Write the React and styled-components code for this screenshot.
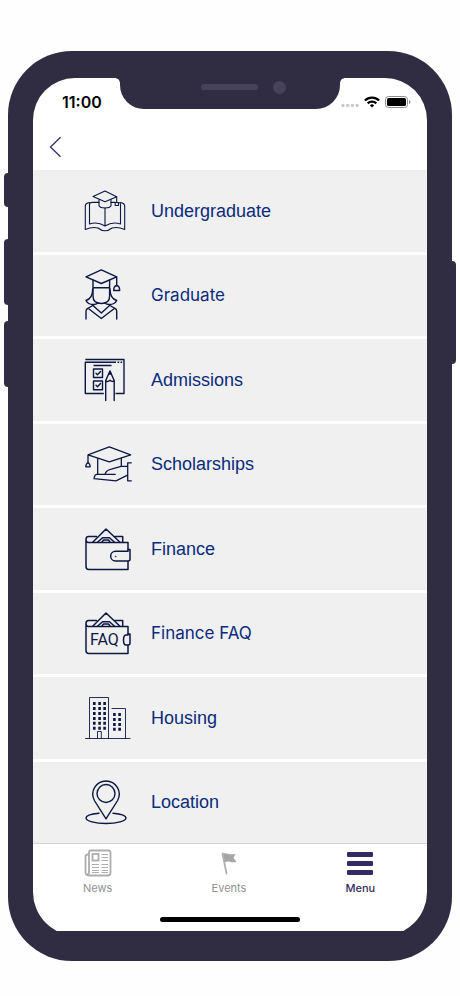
import React from "react";
import styled, { createGlobalStyle } from "styled-components";

const GlobalStyle = createGlobalStyle`
  *, *::before, *::after { box-sizing: border-box; }
  body { margin: 0; background: #fefefe; font-family: "Liberation Sans", Arial, sans-serif; }
`;

const SHELL = "#302d43";
const NAVY = "#0d1744";

const Page = styled.div`
  display: flex;
  min-height: 100vh;
  padding: 51px 0 35px;
`;

const Rail = styled.div`
  flex: 0 0 8px;
  display: flex;
  flex-direction: column;
  padding-top: ${(p) => p.$top}px;
  align-items: ${(p) => (p.$side === "left" ? "flex-end" : "flex-start")};
`;

const SideKey = styled.div`
  width: 4px;
  height: ${(p) => p.$length}px;
  margin-top: ${(p) => p.$before || 0}px;
  background: ${SHELL};
  border-radius: ${(p) => (p.$side === "left" ? "4px 0 0 4px" : "0 4px 4px 0")};
`;

const Phone = styled.div`
  flex: 1;
  display: flex;
  padding: 27px 25px 25px;
  background: ${SHELL};
  border-radius: 64px;
`;

const Screen = styled.div`
  position: relative;
  flex: 1;
  display: flex;
  flex-direction: column;
  padding-bottom: 5px;
  background: #fff;
  border-radius: 42px 42px 44px 44px;
  clip-path: inset(0 0 5px 0);
`;

const Notch = styled.div`
  position: absolute;
  top: -1px;
  left: 50%;
  transform: translateX(-50%);
  width: 220px;
  height: 32px;
  display: flex;
  align-items: center;
  justify-content: flex-end;
  gap: 15px;
  padding: 0 54px 12px 0;
  background: ${SHELL};
  border-radius: 0 0 24px 24px;

  &::before,
  &::after {
    content: "";
    position: absolute;
    top: 1px;
    width: 4px;
    height: 4px;
  }
  &::before {
    left: -4px;
    background: radial-gradient(circle at 0 100%, transparent 3px, ${SHELL} 4px);
  }
  &::after {
    right: -4px;
    background: radial-gradient(circle at 100% 100%, transparent 3px, ${SHELL} 4px);
  }
`;

const Speaker = styled.div`
  width: 57px;
  height: 6px;
  border-radius: 3px;
  background: #454259;
`;

const Camera = styled.div`
  width: 13px;
  height: 13px;
  border-radius: 50%;
  background: #454259;
`;

const StatusBar = styled.div`
  display: flex;
  align-items: center;
  justify-content: space-between;
  height: 48px;
  padding: 0 16px 0 29px;
`;

const Time = styled.time`
  font: 600 16px/20px Inter, sans-serif;
  color: #000;
`;

const StatusIcons = styled.div`
  display: flex;
  align-items: center;
  gap: 5px;
`;

const Header = styled.header`
  display: flex;
  align-items: center;
  height: 44px;
  padding: 0 12px 2px;
`;

const BackButton = styled.button`
  display: flex;
  padding: 4px;
  border: 0;
  background: none;
  cursor: pointer;
`;

const MenuList = styled.nav`
  flex: 1;
  display: grid;
  grid-template-columns: 1fr;
  grid-auto-rows: minmax(72px, 1fr);
  gap: 3px;
`;

const MenuLink = styled.a`
  display: flex;
  align-items: center;
  gap: 19px;
  padding: 0 24px 0 51px;
  background: #f0f0f0;
  color: #0b2b7c;
  text-decoration: none;
  font-family: ${(p) => (p.$face === "system" ? "Inter" : '"Liberation Sans"')}, sans-serif;
  font-size: ${(p) => (p.$face === "system" ? 17 : 18)}px;
  line-height: 24px;
`;

const IconSvg = styled.svg`
  flex: none;
  width: 48px;
  height: 52px;
  fill: none;
  stroke: ${NAVY};
  stroke-width: ${(p) => p.$weight};
  stroke-linejoin: round;
  stroke-linecap: round;
`;

const TabBar = styled.nav`
  display: grid;
  grid-template-columns: repeat(3, 1fr);
  border-top: 1px solid #d4d4d4;
  padding-top: 5px;
`;

const Tab = styled.button`
  display: flex;
  flex-direction: column;
  align-items: center;
  gap: 4px;
  padding: 0 2px 0 0;
  border: 0;
  background: none;
  font: ${(p) => (p.$active ? 500 : 400)} 11px/14px Inter, sans-serif;
  color: ${(p) => (p.$active ? "#342d63" : "#929292")};
  cursor: pointer;
`;

const HomeArea = styled.div`
  display: flex;
  justify-content: center;
  padding: 22px 0 9px;
`;

const HomeIndicator = styled.div`
  width: 140px;
  height: 5px;
  border-radius: 3px;
  background: #000;
`;

function Icon({ weight = 1.4, children }) {
  return (
    <IconSvg viewBox="0 0 48 52" $weight={weight} aria-hidden="true">
      {children}
    </IconSvg>
  );
}

const UndergraduateIcon = () => (
  <Icon weight={1.1}>
    <path d="M9 11.5 21 6l11.7 5.7L21 16.7z" />
    <path d="M15 14.5v6.3q1 2.2 6 2.2t6-2.2v-6.3" />
    <path d="M32.7 11.7v5.5M31.2 17.5h3.2v3h-3.2z" />
    <path d="M15 17.4H8.5q-3 0-3 2V39q8-2.6 15.5 2 7.5-4.6 15.5-2V19.5q0-2-2-2M27 17.4h4M21 23v18" />
    <path d="M5.5 17.6Q1.3 18 1.3 21v23.4q7-3 12.7-1.4 3.5 2.8 7 2.8t7-2.8q5.7-1.6 12.7 1.4V21q0-3-4.2-3.4" />
  </Icon>
);

const GraduateIcon = () => (
  <Icon weight={1.4}>
    <path d="M2 7.8 17.3.8l15.4 7L17.3 14.5zM32.7 7.8v8.7" />
    <path d="M32.7 16.5q-3 .5-3 5h6q0-4.5-3-5z" />
    <path d="M9 11v16q0 7.5 8.3 7.5t8.3-7.5V11M9 18.8h16.6" />
    <path d="M8.7 20c0 6-1.7 10-6.7 11.5q2 4 7.2 4 3 0 5-1.5M26 20c0 6 1.7 10 6.7 11.5q-2 4-7.2 4-3 0-5-1.5" />
    <path d="M2 50v-8q0-2 2.5-3l5-3M32.7 50v-8q0-2-2.5-3l-5-3" />
    <path d="m5 40 12.3 9.5L29.7 40M9 36.5l8.3 7.5 8.3-7.5" />
  </Icon>
);

const AdmissionsIcon = () => (
  <Icon weight={1.4}>
    <path strokeLinecap="butt" d="M1.3 5.5H40v34h-8.5M32 8.2H1.3v31.3h18.5M9.5 11.5h18" />
    <path strokeLinecap="butt" d="M33.5 8.2h1.7M36.5 8.2h1.7" />
    <path d="M9.5 15h9v8.5h-9zM9.5 27h9v8.7h-9z" />
    <path d="m12 19.3 1.5 1.5 3-3.3M12 31.3l1.5 1.5 3-3.3" />
    <path d="M21.7 46.5V26.5L26 17l4.2 9.5v20M21.7 26.5q2 2 4.3-.3 2.3 2.3 4.2.3" />
    <path fill={NAVY} d="m25 20 1-2.5 1 2.5z" />
  </Icon>
);

const ScholarshipsIcon = () => (
  <Icon weight={1.3}>
    <path d="m4 16.8 21.3-8 21.4 8-21.4 7zM4 16.8v8" />
    <path d="M4 24.8q-2 .5-2.2 4h4.4q-.2-3.5-2.2-4z" />
    <path d="M13.7 20.5v15.3M37.3 20.5v7.8" />
    <path d="M47.3 24.8h-3.6v18h3.6M43.7 28.3h-6.500l-9 2.500q-6.500 1.500-7 5.200" />
    <path d="M31.3 36.3H13q-2.5 0-3 4.400l22 2.100 11.500-5.600" />
  </Icon>
);

const WalletTop = () => (
  <>
    <path d="M44 27.5v-8H4.5Q2 19.5 2 16.5t2.5-3h8M31 13.5h7.7v6M2 16.5v27q0 3 2.8 3H44v-8" />
    <path d="M8.7 19.3 22 6l14 13.3M13.5 19.3l5-4.6h7l5 4.6M18 19l1.5-2h5l1.500 2" />
  </>
);

const FinanceIcon = () => (
  <Icon weight={1.5}>
    <WalletTop />
    <path d="M44 28.3H31.5a4.8 4.8 0 0 0 0 9.7H44q2 0 2-2v-9.5h-2" />
    <circle cx="31.5" cy="33.5" r=".4" strokeWidth="0.6" />
  </Icon>
);

const IconText = styled.text`
  font: 400 16px Roboto, sans-serif;
  fill: ${NAVY};
  stroke: none;
`;

const FinanceFaqIcon = () => (
  <Icon weight={1.5}>
    <WalletTop />
    <path d="M44 28h-2q-2.5 0-2.5 5t2.500 5h2q2 0 2-2v-9h-2" />
    <IconText x="6" y="38">FAQ</IconText>
  </Icon>
);

const windows = (columns, rows) =>
  columns.flatMap((x) => rows.map((y) => `M${x - 1.3} ${y - 1.5}h2.6v3h-2.6z`)).join("");

const HousingIcon = () => (
  <Icon weight={0.9}>
    <path d="M1.5 46.5H46M5.5 46.5v-41h19v41M28 16.5h13.5v30M13.5 46.5v-7h3.8v7" />
    <path
      fill={NAVY}
      stroke="none"
      d={
        windows([10.3, 15.6, 20.6], [11.6, 16.6, 21.5, 26.4, 31.3, 36.2]) +
        windows([30.4, 35.6], [22.6, 27.5, 32.4, 37.3])
      }
    />
  </Icon>
);

const LocationIcon = () => (
  <Icon weight={1.4}>
    <path d="M22 42.8 10.4 24.5A13.2 13.2 0 1 1 33.6 24.5z" />
    <circle cx="22" cy="17.5" r="9" />
    <path d="M15 37.3C7 38 2 39.7 2 42c0 3 9 5.500 20 5.500S42 45 42 42c0-2.3-5-4-13-4.700" />
  </Icon>
);

const NewsIcon = () => (
  <svg width="28" height="28" viewBox="0 0 28 28" fill="none" stroke="#adadad" strokeWidth="1.8" aria-hidden="true">
    <path d="M5 5.500H3.500Q1.500 5.500 1.500 8v15q0 3.500 3.500 3.500h19q2.500 0 2.500-3V3.500q0-2-2-2H7q-2 0-2 2V23q0 2.500-2 2.500" />
    <rect x="8.5" y="5" width="6" height="6.5" />
    <path strokeWidth="1" d="M17.5 5.500H24M17.5 8.500H24M17.5 11.500H24M8 15.500h7M8 18.500h7M8 21.500h7M8 23.500h7M17.500 15.500H24M17.500 18.500H24M17.500 21.500H24M17.500 23.500H24" />
  </svg>
);

const EventsIcon = () => (
  <svg width="28" height="28" viewBox="0 0 28 28" aria-hidden="true">
    <path d="m7.5 4.500 4 20" stroke="#b0b0b0" strokeWidth="1.8" strokeLinecap="round" />
    <path d="M8 4.500c4-1 6 2 12.500.3L18.500 9l3 3.700c-4.500 2-7-1.500-11.500.5z" fill="#a6a6a6" />
  </svg>
);

const MenuIcon = () => (
  <svg width="28" height="28" viewBox="0 0 28 28" fill="#342b64" aria-hidden="true">
    <rect x="1" y="3" width="26" height="5" rx="1" />
    <rect x="1" y="12" width="26" height="5" rx="1" />
    <rect x="1" y="21" width="26" height="5" rx="1" />
  </svg>
);

const SignalIcon = () => (
  <svg width="18" height="12" viewBox="0 0 18 12" fill="#c9c9c9" aria-hidden="true">
    <circle cx="2" cy="9.5" r="1.7" />
    <circle cx="6.7" cy="9.5" r="1.7" />
    <circle cx="11.4" cy="9.5" r="1.7" />
    <circle cx="16.1" cy="9.5" r="1.7" />
  </svg>
);

const WifiIcon = () => (
  <svg width="16" height="12" viewBox="0 0 16 12" fill="none" stroke="#000" strokeWidth="2.2" aria-hidden="true">
    <path d="M.9 4.500a10 10 0 0 1 14.200 0M3.700 7.400a6.100 6.100 0 0 1 8.600 0" />
    <path d="M8 11.500 5.900 9.400a3 3 0 0 1 4.200 0z" fill="#000" stroke="none" />
  </svg>
);

const BatteryIcon = () => (
  <svg width="26" height="12" viewBox="0 0 26 12" aria-hidden="true">
    <rect x=".5" y=".5" width="22" height="11" rx="3" fill="none" stroke="#8c8c8c" />
    <rect x="2" y="2" width="19" height="8" rx="1.6" fill="#000" />
    <path d="M24 4v4q1.500-.6 1.500-2T24 4z" fill="#8c8c8c" />
  </svg>
);

const items = [
  { label: "Undergraduate", Glyph: UndergraduateIcon },
  { label: "Graduate", Glyph: GraduateIcon, face: "system" },
  { label: "Admissions", Glyph: AdmissionsIcon },
  { label: "Scholarships", Glyph: ScholarshipsIcon },
  { label: "Finance", Glyph: FinanceIcon },
  { label: "Finance FAQ", Glyph: FinanceFaqIcon, face: "system" },
  { label: "Housing", Glyph: HousingIcon },
  { label: "Location", Glyph: LocationIcon },
];

const tabs = [
  { label: "News", Glyph: NewsIcon },
  { label: "Events", Glyph: EventsIcon },
  { label: "Menu", Glyph: MenuIcon, active: true },
];

export default function App() {
  return (
    <>
      <GlobalStyle />
      <Page>
        <Rail $side="left" $top={122}>
          <SideKey $side="left" $length={34} />
          <SideKey $side="left" $length={66} $before={32} />
          <SideKey $side="left" $length={66} $before={16} />
        </Rail>
        <Phone>
          <Screen>
            <Notch>
              <Speaker />
              <Camera />
            </Notch>
            <StatusBar>
              <Time>11:00</Time>
              <StatusIcons>
                <SignalIcon />
                <WifiIcon />
                <BatteryIcon />
              </StatusIcons>
            </StatusBar>
            <Header>
              <BackButton aria-label="Back">
                <svg width="13" height="22" viewBox="0 0 13 22" fill="none" stroke="#322e6c" strokeWidth="1.3" aria-hidden="true">
                  <path d="M11.5 1.2 1.500 11l10 9.800" />
                </svg>
              </BackButton>
            </Header>
            <MenuList aria-label="Sections">
              {items.map(({ label, Glyph, face }) => (
                <MenuLink key={label} href="#" $face={face}>
                  <Glyph />
                  {label}
                </MenuLink>
              ))}
            </MenuList>
            <TabBar aria-label="Tabs">
              {tabs.map(({ label, Glyph, active }) => (
                <Tab key={label} $active={active} aria-current={active ? "page" : undefined}>
                  <Glyph />
                  {label}
                </Tab>
              ))}
            </TabBar>
            <HomeArea>
              <HomeIndicator />
            </HomeArea>
          </Screen>
        </Phone>
        <Rail $side="right" $top={210}>
          <SideKey $side="right" $length={103} />
        </Rail>
      </Page>
    </>
  );
}
